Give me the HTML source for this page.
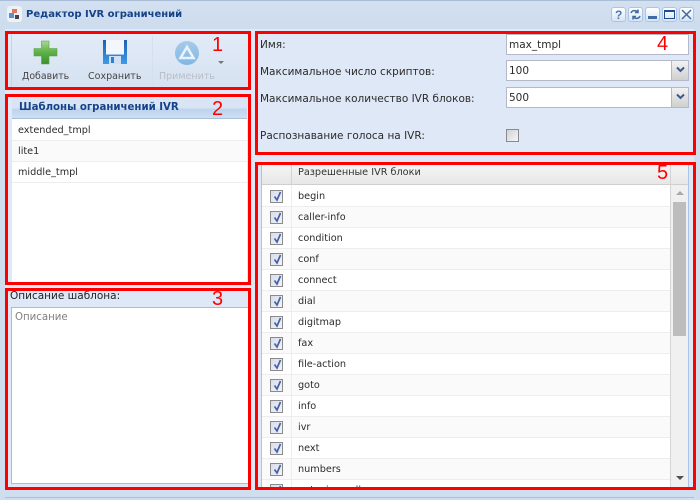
<!DOCTYPE html>
<html><head><meta charset="utf-8">
<style>
html,body{margin:0;padding:0;width:700px;height:500px;overflow:hidden;background:#dfe8f6}
*{box-sizing:border-box}
.a{position:absolute}
#r{position:relative;width:700px;height:500px;overflow:hidden;font-family:"DejaVu Sans","Liberation Sans",sans-serif;font-size:9.7px;color:#2b2b2b;background:#dfe8f6}
.t{position:absolute;white-space:nowrap;line-height:14px}
.red{position:absolute;border:3px solid #f00;z-index:20}
.rn{position:absolute;font:20px "Liberation Sans",sans-serif;color:#f00;z-index:21;line-height:22px}
.row{position:absolute;left:262px;width:409px;height:21px;border-bottom:1px solid #ededed}
.row.o{background:#fafafa}
.row span{position:absolute;left:36px;top:4px;line-height:14px;white-space:nowrap}
.row i{position:absolute;left:29px;top:-1px;width:1px;height:22px;background:#ededed}
.cb{position:absolute;left:8px;top:4px;width:13px;height:13px;border:1px solid #8a8a8a;background:linear-gradient(135deg,#d8dcea,#f3f4f8)}
.cb svg{position:absolute;left:1px;top:0}
.tb{position:absolute;top:7px;width:15px;height:15px;border:1px solid #a9c4e6;border-radius:3px;background:linear-gradient(#fff,#d7e4f5);}
.list{position:absolute;left:12px;width:235px;height:21px;border-bottom:1px solid #ededed}
.list span{position:absolute;left:6px;top:4px;line-height:14px;white-space:nowrap}
.inp{position:absolute;left:506px;width:183px;height:21px;background:#fff;border:1px solid #b5b8c8}
.inp span{position:absolute;left:2px;top:3px;line-height:14px;font-size:10.5px}
.btn{position:absolute;right:0;top:0;width:17px;height:19px;border-left:1px solid #b5b8c8;background:linear-gradient(#f2f2f2,#cfcfcf)}
.lb{font-size:10.5px}
</style></head><body><div id="r">
<!-- window frame -->
<div class="a" style="left:0;top:0;width:700px;height:29px;background:linear-gradient(#d3e0f0,#cddcee)"></div>
<div class="a" style="left:0;top:0;width:700px;height:1px;background:#a9bdd6"></div>
<div class="a" style="left:0;top:490px;width:700px;height:10px;background:#cfdeef"></div>
<div class="a" style="left:0;top:497px;width:700px;height:1px;background:#a6c0e0"></div>
<div class="a" style="left:0;top:29px;width:5px;height:471px;background:#cfdeef"></div>
<div class="a" style="left:694px;top:29px;width:6px;height:471px;background:#cfdeef"></div>
<!-- title icon -->
<div class="a" style="left:7px;top:6px;width:15px;height:16px;background:#eef1f5;border-radius:3px"></div>
<div class="a" style="left:12px;top:9px;width:5px;height:4px;background:#e07a5f"></div>
<div class="a" style="left:9px;top:13px;width:5px;height:5px;background:#5a8fd0"></div>
<div class="a" style="left:15px;top:15px;width:4px;height:4px;background:#444"></div>
<div class="t" style="left:26px;top:8px;font-size:10px;font-weight:bold;color:#15428b">Редактор IVR ограничений</div>
<!-- title tools -->
<div class="tb" style="left:611px"><span class="a" style="left:3px;top:0;font:bold 12px 'Liberation Sans',sans-serif;color:#4a78b5">?</span></div>
<div class="tb" style="left:628px"><svg class="a" style="left:1px;top:1px" width="11" height="11" viewBox="0 0 11 11"><path d="M1 4 C2 1 6 1 8 3 M8 0.5 V3.5 H5 M10 7 C9 10 5 10 3 8 M3 10.5 V7.5 H6" fill="none" stroke="#3e6aa5" stroke-width="1.5"/></svg></div>
<div class="tb" style="left:645px"><div class="a" style="left:2px;top:8px;width:9px;height:3px;background:#3e6aa5"></div></div>
<div class="tb" style="left:662px"><div class="a" style="left:1px;top:2px;width:11px;height:9px;border:1px solid #1f4e8f;border-top-width:2px"></div></div>
<div class="tb" style="left:679px"><svg class="a" style="left:1px;top:1px" width="11" height="11" viewBox="0 0 11 11"><path d="M1 1 L10 10 M10 1 L1 10" stroke="#3e6aa5" stroke-width="1.5"/></svg></div>

<!-- toolbar -->
<div class="a" style="left:5px;top:31px;width:246px;height:59px;background:linear-gradient(#e3ecf8,#d5e1f1)"></div>
<div class="a" style="left:11px;top:32px;width:1px;height:57px;background:#c3d4ea"></div>
<svg class="a" style="left:33px;top:40px" width="25" height="25" viewBox="0 0 25 25"><defs><linearGradient id="g" x1="0" y1="0" x2="0" y2="1"><stop offset="0" stop-color="#a6d890"/><stop offset=".5" stop-color="#5db145"/><stop offset="1" stop-color="#3d8f2c"/></linearGradient></defs><path d="M8.5 1 H16 V8.5 H24 V16 H16 V24 H8.5 V16 H1 V8.5 H8.5 Z" fill="url(#g)" stroke="#5a9e48" stroke-width=".6"/></svg>
<div class="t" style="left:22px;top:70px;color:#444;font-size:9.4px">Добавить</div>
<svg class="a" style="left:103px;top:40px" width="24" height="24" viewBox="0 0 24 24"><defs><linearGradient id="s" x1="0" y1="0" x2="0" y2="1"><stop offset="0" stop-color="#1f5fb5"/><stop offset="1" stop-color="#3f9ae8"/></linearGradient></defs><rect width="24" height="24" fill="url(#s)"/><rect x="3" y="0" width="18" height="14" fill="#f3f6fb"/><rect x="3" y="14" width="18" height="1" fill="#9cc2ec"/><rect x="6" y="16" width="12" height="8" fill="#cfe0f3"/><rect x="8" y="17" width="3" height="6" fill="#2f7fd8"/></svg>
<div class="t" style="left:88px;top:70px;color:#444;font-size:9.5px">Сохранить</div>
<svg class="a" style="left:175px;top:41px" width="24" height="24" viewBox="0 0 24 24"><defs><linearGradient id="b" x1="0" y1="0" x2="0" y2="1"><stop offset="0" stop-color="#a8cbe8"/><stop offset="1" stop-color="#7fb7e4"/></linearGradient></defs><circle cx="12" cy="12" r="12" fill="url(#b)"/><path d="M12 6 L18.5 17 H5.5 Z" fill="none" stroke="#e8f2fb" stroke-width="2.6"/></svg>
<div class="t" style="left:159px;top:70px;color:#b9bec6;font-size:9.5px">Применить</div>
<div class="a" style="left:218px;top:61px;width:0;height:0;border:3px solid transparent;border-top:3px solid #777"></div>
<div class="a" style="left:152px;top:36px;width:1px;height:50px;background:#d5dfed"></div>

<!-- list panel -->
<div class="a" style="left:12px;top:97px;width:235px;height:187px;background:#fff"></div>
<div class="a" style="left:12px;top:97px;width:235px;height:22px;background:linear-gradient(#d9e5f4 0,#d9e5f4 50%,#bdd4ee 60%,#cfdff2 100%);border-bottom:1px solid #a9bfd8"></div>
<div class="t" style="left:19px;top:101px;font-weight:bold;color:#15428b;font-size:10.2px">Шаблоны ограничений IVR</div>
<div class="list" style="top:120px"><span>extended_tmpl</span></div>
<div class="list" style="top:141px;background:#fafafa"><span>lite1</span></div>
<div class="list" style="top:162px"><span>middle_tmpl</span></div>

<!-- description -->
<div class="t lb" style="left:10px;top:289px;color:#222">Описание шаблона:</div>
<div class="a" style="left:11px;top:307px;width:238px;height:177px;background:#fff;border:1px solid #b5b8c8"></div>
<div class="t" style="left:15px;top:311px;color:#808080;font-size:10.2px">Описание</div>

<!-- form -->
<div class="t lb" style="left:260px;top:38px">Имя:</div>
<div class="inp" style="top:34px;height:21px"><span>max_tmpl</span></div>
<div class="t lb" style="left:260px;top:65px">Максимальное число скриптов:</div>
<div class="inp" style="top:60px"><span>100</span><div class="btn"><svg class="a" style="left:3px;top:5px" width="11" height="8" viewBox="0 0 11 8"><path d="M2 1.5 L5.5 5 L9 1.5" fill="none" stroke="#3b5a8c" stroke-width="2"/></svg></div></div>
<div class="t lb" style="left:260px;top:92px">Максимальное количество IVR блоков:</div>
<div class="inp" style="top:87px"><span>500</span><div class="btn"><svg class="a" style="left:3px;top:5px" width="11" height="8" viewBox="0 0 11 8"><path d="M2 1.5 L5.5 5 L9 1.5" fill="none" stroke="#3b5a8c" stroke-width="2"/></svg></div></div>
<div class="t lb" style="left:260px;top:129px">Распознавание голоса на IVR:</div>
<div class="a" style="left:506px;top:129px;width:13px;height:13px;border:1px solid #8a8a8a;background:linear-gradient(135deg,#cfd3d8,#f5f6f7)"></div>

<!-- grid -->
<div class="a" style="left:261px;top:162px;width:428px;height:328px;background:#fff;border-left:1px solid #a9c4e8;border-right:1px solid #a9c4e8;overflow:hidden"></div>
<div class="a" style="left:262px;top:163px;width:426px;height:22px;background:linear-gradient(#f6f6f6,#e7e7e7);border-bottom:1px solid #cfcfcf"></div>
<div class="a" style="left:291px;top:163px;width:1px;height:22px;background:#d4d4d4"></div>
<div class="a" style="left:670px;top:163px;width:1px;height:22px;background:#d4d4d4"></div>
<div class="t" style="left:298px;top:166px;color:#333">Разрешенные IVR блоки</div>

<div class="row" style="top:186px"><i></i><div class="cb"><svg width="11" height="11" viewBox="0 0 11 11"><path d="M2.5 5.5 L5 9 L8.5 1" fill="none" stroke="#4463a8" stroke-width="1.7"/></svg></div><span>begin</span></div>
<div class="row o" style="top:207px"><i></i><div class="cb"><svg width="11" height="11" viewBox="0 0 11 11"><path d="M2.5 5.5 L5 9 L8.5 1" fill="none" stroke="#4463a8" stroke-width="1.7"/></svg></div><span>caller-info</span></div>
<div class="row" style="top:228px"><i></i><div class="cb"><svg width="11" height="11" viewBox="0 0 11 11"><path d="M2.5 5.5 L5 9 L8.5 1" fill="none" stroke="#4463a8" stroke-width="1.7"/></svg></div><span>condition</span></div>
<div class="row o" style="top:249px"><i></i><div class="cb"><svg width="11" height="11" viewBox="0 0 11 11"><path d="M2.5 5.5 L5 9 L8.5 1" fill="none" stroke="#4463a8" stroke-width="1.7"/></svg></div><span>conf</span></div>
<div class="row" style="top:270px"><i></i><div class="cb"><svg width="11" height="11" viewBox="0 0 11 11"><path d="M2.5 5.5 L5 9 L8.5 1" fill="none" stroke="#4463a8" stroke-width="1.7"/></svg></div><span>connect</span></div>
<div class="row o" style="top:291px"><i></i><div class="cb"><svg width="11" height="11" viewBox="0 0 11 11"><path d="M2.5 5.5 L5 9 L8.5 1" fill="none" stroke="#4463a8" stroke-width="1.7"/></svg></div><span>dial</span></div>
<div class="row" style="top:312px"><i></i><div class="cb"><svg width="11" height="11" viewBox="0 0 11 11"><path d="M2.5 5.5 L5 9 L8.5 1" fill="none" stroke="#4463a8" stroke-width="1.7"/></svg></div><span>digitmap</span></div>
<div class="row o" style="top:333px"><i></i><div class="cb"><svg width="11" height="11" viewBox="0 0 11 11"><path d="M2.5 5.5 L5 9 L8.5 1" fill="none" stroke="#4463a8" stroke-width="1.7"/></svg></div><span>fax</span></div>
<div class="row" style="top:354px"><i></i><div class="cb"><svg width="11" height="11" viewBox="0 0 11 11"><path d="M2.5 5.5 L5 9 L8.5 1" fill="none" stroke="#4463a8" stroke-width="1.7"/></svg></div><span>file-action</span></div>
<div class="row o" style="top:375px"><i></i><div class="cb"><svg width="11" height="11" viewBox="0 0 11 11"><path d="M2.5 5.5 L5 9 L8.5 1" fill="none" stroke="#4463a8" stroke-width="1.7"/></svg></div><span>goto</span></div>
<div class="row" style="top:396px"><i></i><div class="cb"><svg width="11" height="11" viewBox="0 0 11 11"><path d="M2.5 5.5 L5 9 L8.5 1" fill="none" stroke="#4463a8" stroke-width="1.7"/></svg></div><span>info</span></div>
<div class="row o" style="top:417px"><i></i><div class="cb"><svg width="11" height="11" viewBox="0 0 11 11"><path d="M2.5 5.5 L5 9 L8.5 1" fill="none" stroke="#4463a8" stroke-width="1.7"/></svg></div><span>ivr</span></div>
<div class="row" style="top:438px"><i></i><div class="cb"><svg width="11" height="11" viewBox="0 0 11 11"><path d="M2.5 5.5 L5 9 L8.5 1" fill="none" stroke="#4463a8" stroke-width="1.7"/></svg></div><span>next</span></div>
<div class="row o" style="top:459px"><i></i><div class="cb"><svg width="11" height="11" viewBox="0 0 11 11"><path d="M2.5 5.5 L5 9 L8.5 1" fill="none" stroke="#4463a8" stroke-width="1.7"/></svg></div><span>numbers</span></div>
<div class="row" style="top:480px;height:9px;border:0;overflow:hidden"><i></i><div class="cb"><svg width="11" height="11" viewBox="0 0 11 11"><path d="M2.5 5.5 L5 9 L8.5 1" fill="none" stroke="#4463a8" stroke-width="1.7"/></svg></div><span>outgoing-call</span></div>

<!-- scrollbar -->
<div class="a" style="left:670px;top:185px;width:18px;height:304px;background:#f0f0f0;border-left:1px solid #d4d4d4"></div>
<div class="a" style="left:673px;top:202px;width:13px;height:134px;background:#bdbdbd"></div>
<div class="a" style="left:676px;top:191px;width:0;height:0;border:4px solid transparent;border-top:0;border-bottom:4px solid #a8a8a8"></div>
<div class="a" style="left:676px;top:476px;width:0;height:0;border:4px solid transparent;border-bottom:0;border-top:4px solid #505050"></div>

<!-- red annotations -->
<div class="red" style="left:5px;top:31px;width:246px;height:59px"></div>
<div class="red" style="left:5px;top:94px;width:246px;height:191px"></div>
<div class="red" style="left:5px;top:288px;width:246px;height:202px"></div>
<div class="red" style="left:255px;top:31px;width:441px;height:124px"></div>
<div class="red" style="left:255px;top:162px;width:441px;height:328px"></div>
<div class="rn" style="left:212px;top:34px">1</div>
<div class="rn" style="left:212px;top:98px">2</div>
<div class="rn" style="left:212px;top:288px">3</div>
<div class="rn" style="left:657px;top:33px">4</div>
<div class="rn" style="left:657px;top:162px">5</div>
</div></body></html>
